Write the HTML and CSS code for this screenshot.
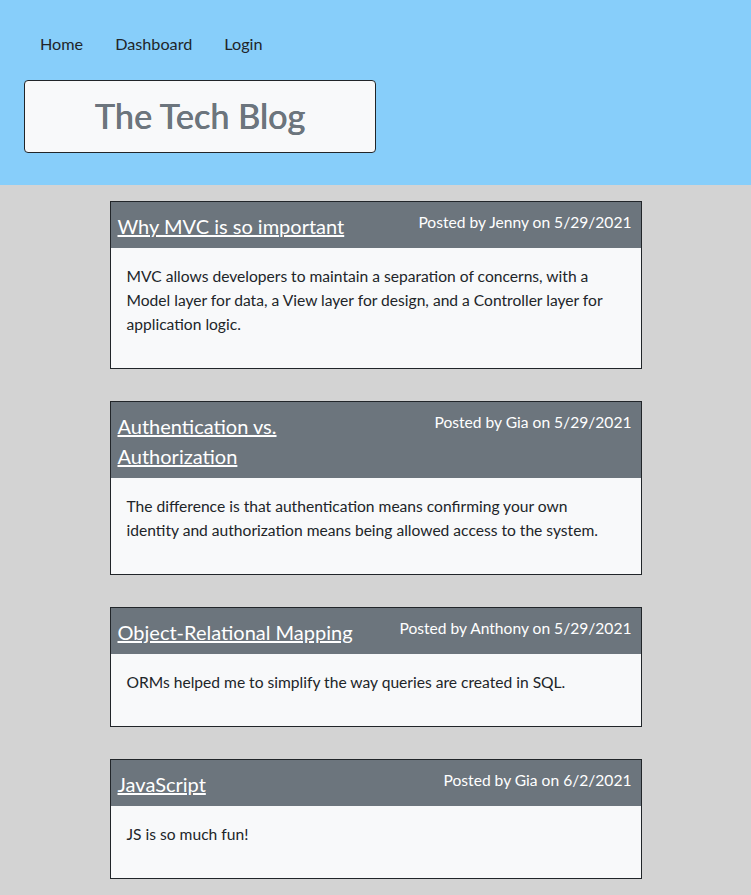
FILE: index.html
```html
<!DOCTYPE html>
<html lang="en">
<head>
<meta charset="utf-8">
<title>The Tech Blog</title>
<link rel="stylesheet" href="styles.css">
</head>
<body>
<header class="site-header">
  <nav class="nav">
    <a class="nav-link" href="#">Home</a>
    <a class="nav-link" href="#">Dashboard</a>
    <a class="nav-link" href="#">Login</a>
  </nav>
  <div class="brand-box">
    <h1 class="brand">The Tech Blog</h1>
  </div>
</header>
<main class="posts">
  <article class="card">
    <div class="card-header">
      <div class="card-title"><a href="#">Why MVC is so important</a></div>
      <div class="card-meta">Posted by Jenny on 5/29/2021</div>
    </div>
    <div class="card-body">
      <p>MVC allows developers to maintain a separation of concerns, with a<br>Model layer for data, a View layer for design, and a Controller layer for<br>application logic.</p>
    </div>
  </article>
  <article class="card">
    <div class="card-header">
      <div class="card-title"><a href="#">Authentication vs. Authorization</a></div>
      <div class="card-meta">Posted by Gia on 5/29/2021</div>
    </div>
    <div class="card-body">
      <p>The difference is that authentication means confirming your own<br>identity and authorization means being allowed access to the system.</p>
    </div>
  </article>
  <article class="card">
    <div class="card-header">
      <div class="card-title"><a href="#">Object-Relational Mapping</a></div>
      <div class="card-meta">Posted by Anthony on 5/29/2021</div>
    </div>
    <div class="card-body">
      <p>ORMs helped me to simplify the way queries are created in SQL.</p>
    </div>
  </article>
  <article class="card">
    <div class="card-header">
      <div class="card-title"><a href="#">JavaScript</a></div>
      <div class="card-meta">Posted by Gia on 6/2/2021</div>
    </div>
    <div class="card-body">
      <p>JS is so much fun!</p>
    </div>
  </article>
</main>
</body>
</html>
```
FILE: styles.css
```css
* { box-sizing: border-box; }
html, body { margin: 0; padding: 0; }
body {
  background: #d3d3d3;
  font-family: "Lato", "Liberation Sans", sans-serif;
  font-size: 16px;
  line-height: 1.5;
  color: #212529;
}
.site-header {
  background: #87cefa;
  padding: 24px 24px 32px;
}
.nav {
  display: flex;
  height: 40px;
}
.nav-link {
  display: block;
  padding: 8px 16px;
  color: #212529;
  text-decoration: none;
  font-size: 16.2px;
  line-height: 24px;
}
.brand-box {
  margin-top: 16px;
  width: 352px;
  height: 73px;
  background: #f8f9fa;
  border: 1px solid #212529;
  border-radius: 4px;
  display: flex;
  align-items: center;
  justify-content: center;
}
.brand {
  margin: 0;
  font-size: 34.2px;
  font-weight: 500;
  line-height: 1.2;
  color: #6c757d;
  padding-bottom: 2px;
  text-shadow: 0.3px 0 0 #6c757d;
}
.posts {
  width: 532px;
  margin: 0 auto;
  padding: 16px 0 1px;
}
.card {
  border: 1px solid #212529;
  background: #f8f9fa;
  margin-bottom: 32px;
}
.card-header {
  background: #6c757d;
  display: flex;
  align-items: flex-start;
  padding: 8px 9px 7px 7px;
}
.card-title {
  width: 50%;
  padding-top: 1px;
  font-size: 20px;
  line-height: 30px;
}
.card-title a {
  color: #ffffff;
  text-decoration: underline;
}
.card-meta {
  width: 50%;
  text-align: right;
  color: #ffffff;
  font-size: 15.6px;
  line-height: 24px;
  white-space: nowrap;
}
.card-body {
  padding: 16px;
}
.card-body p {
  margin: 0 0 16px;
  font-size: 15.6px;
  line-height: 24px;
}
```
